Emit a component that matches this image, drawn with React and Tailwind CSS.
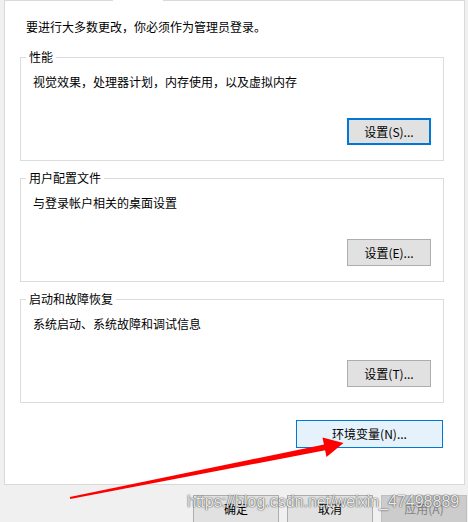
import React from "react";

function Group({ title, desc, label, focused }) {
  return (
    <fieldset className="ml-[15px] mr-[20px] border border-[#dcdcdc] p-0 m-0 min-w-0">
      <legend className="ml-[5px] px-[3px] leading-[16px] text-black">{title}</legend>
      <div className="flex flex-col px-[12px] pb-[15px]">
        <div className="mt-[9px] leading-[16px] text-black">{desc}</div>
        <button
          className={
            "mt-[28px] self-end h-[27px] w-[84px] leading-[16px] text-black " +
            (focused
              ? "border-2 border-[#0078d7] bg-[#e1e1e1]"
              : "border border-[#adadad] bg-[#e1e1e1]")
          }
        >
          {label}
        </button>
      </div>
    </fieldset>
  );
}

export default function App() {
  return (
    <div className="relative w-[468px] h-[522px] overflow-hidden bg-[#f0f0f0] text-[12px] font-['Noto_Sans_CJK_SC',sans-serif]">
      <div className="ml-[4px] w-[461px] h-[485px] bg-white border-x border-b border-[#d9d9d9] flex flex-col">
        <div className="flex h-px shrink-0">
          <div className="w-[108px] bg-[#d9d9d9]" />
          <div className="w-[50px]" />
          <div className="flex-1 bg-[#d9d9d9]" />
        </div>
        <div className="mt-[18px] pl-[21px] leading-[16px] text-black">
          要进行大多数更改，你必须作为管理员登录。
        </div>
        <div className="mt-[14px] flex flex-col gap-[9px]">
          <Group
            title="性能"
            desc="视觉效果，处理器计划，内存使用，以及虚拟内存"
            label="设置(S)..."
            focused
          />
          <Group title="用户配置文件" desc="与登录帐户相关的桌面设置" label="设置(E)..." />
          <Group title="启动和故障恢复" desc="系统启动、系统故障和调试信息" label="设置(T)..." />
        </div>
        <button className="mt-[17px] mr-[21px] self-end h-[28px] w-[147px] border border-[#0078d7] bg-[#e5f1fb] leading-[16px] text-black">
          环境变量(N)...
        </button>
      </div>
      <div className="mt-[10px] flex justify-end gap-2 pr-[1px]">
        <button className="h-[28px] w-[86px] border border-[#adadad] bg-[#e1e1e1] text-black">确定</button>
        <button className="h-[28px] w-[86px] border border-[#adadad] bg-[#e1e1e1] text-black">取消</button>
        <button className="h-[28px] w-[86px] border border-[#bfbfbf] bg-[#cccccc] text-[#838383]">应用(A)</button>
      </div>
      <div className="pointer-events-none absolute left-[187px] top-[494px] whitespace-nowrap font-['Liberation_Sans',Arial,sans-serif] text-[16px] leading-none text-white/90 [text-shadow:0_0_1px_rgba(0,0,0,0.9),0_0_2px_rgba(0,0,0,0.35)]">
        https://blog.csdn.net/weixin_47498889
      </div>
      <svg
        className="pointer-events-none absolute left-0 top-0"
        width="468"
        height="522"
        viewBox="0 0 468 522"
      >
        <polygon
          points="70.2,498.9 69.8,496.9 325.4,444.2 326.6,450.1"
          fill="#fe0000"
        />
        <polygon points="322.5,437.5 343.5,443 326.5,457" fill="#fe0000" />
      </svg>
    </div>
  );
}
